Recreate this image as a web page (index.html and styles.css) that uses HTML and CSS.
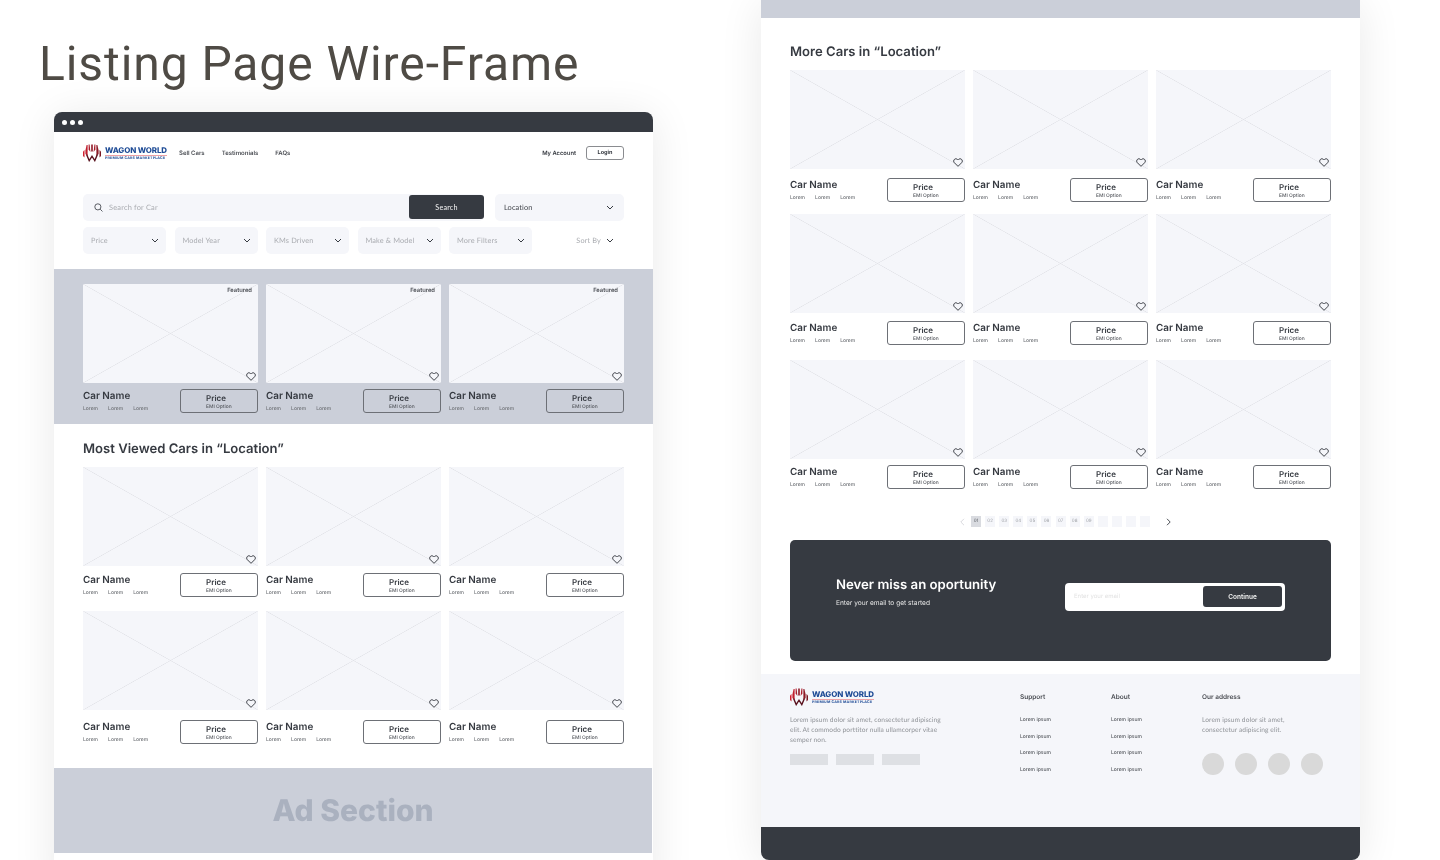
FILE: index.html
```html
<!DOCTYPE html>
<html lang="en">
<head>
<meta charset="utf-8">
<title>Listing Page Wire-Frame</title>
<link rel="stylesheet" href="styles.css">
</head>
<body>
<svg class="defs" aria-hidden="true">
  <symbol id="heart" viewBox="0 0 12 11"><path d="M6 10.2 1.5 5.7a2.8 2.8 0 0 1 0-3.9 2.7 2.7 0 0 1 3.9 0l.6.6.6-.6a2.7 2.7 0 0 1 3.9 0 2.8 2.8 0 0 1 0 3.9z" fill="none" stroke="currentColor" stroke-width="1.15"/></symbol>
  <symbol id="chev" viewBox="0 0 8 5"><path d="M1 1l3 3 3-3" fill="none" stroke="currentColor" stroke-width="1"/></symbol>
  <symbol id="mark" viewBox="0 0 18 18">
    <path d="M0 7.5 1.5 6V13.5L0 12z" fill="#d0202f"/>
    <path d="M2.4 6.5 3.6 1 4.6 1V12L2.4 10z" fill="#c01e2d"/>
    <path d="M5.6 0.5H6.6L7.4 8 5.6 5.5z" fill="#a81b2a"/>
    <path d="M8.2 0 9 1 9.8 0V7L9 8 8.2 7z" fill="#8f1a27"/>
    <path d="M11.4 0.5H12.4V5.5L10.6 8z" fill="#a81b2a"/>
    <path d="M13.4 1 14.4 1 15.6 6.5V10L13.4 12z" fill="#8d1a26"/>
    <path d="M16.5 6 18 7.5V12L16.5 13.5z" fill="#7a1722"/>
    <path d="M3.6 10.5 6.2 16.6 9 12.2 11.8 16.6 14.4 10.5" fill="none" stroke="#5b1420" stroke-width="1.4"/>
  </symbol>
</svg>

<h1 class="title">Listing Page Wire-Frame</h1>

<section class="window window-left">
  <div class="titlebar"><i class="dot"></i><i class="dot"></i><i class="dot"></i></div>
  <header class="topbar">
    <div class="logo"><svg class="logo-mark"><use href="#mark"/></svg><div class="logo-text"><b>WAGON WORLD</b><span>PREMIUM CARS MARKETPLACE</span></div></div>
    <nav class="nav"><a>Sell Cars</a><a>Testimonials</a><a>FAQs</a></nav>
    <a class="account">My Account</a>
    <a class="login">Login</a>
  </header>

  <div class="search-row">
    <div class="search-box">
      <svg class="search-icon" viewBox="0 0 10 10"><circle cx="4.3" cy="4.3" r="3.4" fill="none" stroke="currentColor" stroke-width=".9"/><path d="M6.9 6.9 9.4 9.4" stroke="currentColor" stroke-width=".9"/></svg>
      <span class="placeholder">Search for Car</span>
      <button class="search-btn">Search</button>
    </div>
    <div class="location"><span>Location</span><svg class="chev"><use href="#chev"/></svg></div>
  </div>

  <div class="filter-row">
    <div class="filter"><span>Price</span><svg class="chev"><use href="#chev"/></svg></div>
    <div class="filter"><span>Model Year</span><svg class="chev"><use href="#chev"/></svg></div>
    <div class="filter"><span>KMs Driven</span><svg class="chev"><use href="#chev"/></svg></div>
    <div class="filter"><span>Make &amp; Model</span><svg class="chev"><use href="#chev"/></svg></div>
    <div class="filter"><span>More Filters</span><svg class="chev"><use href="#chev"/></svg></div>
    <div class="sort"><span>Sort By</span><svg class="chev"><use href="#chev"/></svg></div>
  </div>

  <section class="featured">
    <div class="cards g6">
      <article class="card"><div class="photo"><span class="tag">Featured</span><svg class="heart"><use href="#heart"/></svg></div><div class="info"><div class="meta"><h3>Car Name</h3><p><span>Lorem</span><span>Lorem</span><span>Lorem</span></p></div><div class="price"><b>Price</b><small>EMI Option</small></div></div></article>
      <article class="card"><div class="photo"><span class="tag">Featured</span><svg class="heart"><use href="#heart"/></svg></div><div class="info"><div class="meta"><h3>Car Name</h3><p><span>Lorem</span><span>Lorem</span><span>Lorem</span></p></div><div class="price"><b>Price</b><small>EMI Option</small></div></div></article>
      <article class="card"><div class="photo"><span class="tag">Featured</span><svg class="heart"><use href="#heart"/></svg></div><div class="info"><div class="meta"><h3>Car Name</h3><p><span>Lorem</span><span>Lorem</span><span>Lorem</span></p></div><div class="price"><b>Price</b><small>EMI Option</small></div></div></article>
    </div>
  </section>

  <section class="listing">
    <h2>Most Viewed Cars in “Location”</h2>
    <div class="cards g7">
      <article class="card"><div class="photo"><svg class="heart"><use href="#heart"/></svg></div><div class="info"><div class="meta"><h3>Car Name</h3><p><span>Lorem</span><span>Lorem</span><span>Lorem</span></p></div><div class="price"><b>Price</b><small>EMI Option</small></div></div></article>
      <article class="card"><div class="photo"><svg class="heart"><use href="#heart"/></svg></div><div class="info"><div class="meta"><h3>Car Name</h3><p><span>Lorem</span><span>Lorem</span><span>Lorem</span></p></div><div class="price"><b>Price</b><small>EMI Option</small></div></div></article>
      <article class="card"><div class="photo"><svg class="heart"><use href="#heart"/></svg></div><div class="info"><div class="meta"><h3>Car Name</h3><p><span>Lorem</span><span>Lorem</span><span>Lorem</span></p></div><div class="price"><b>Price</b><small>EMI Option</small></div></div></article>
    </div>
    <div class="cards g10 next-14">
      <article class="card"><div class="photo"><svg class="heart"><use href="#heart"/></svg></div><div class="info"><div class="meta"><h3>Car Name</h3><p><span>Lorem</span><span>Lorem</span><span>Lorem</span></p></div><div class="price"><b>Price</b><small>EMI Option</small></div></div></article>
      <article class="card"><div class="photo"><svg class="heart"><use href="#heart"/></svg></div><div class="info"><div class="meta"><h3>Car Name</h3><p><span>Lorem</span><span>Lorem</span><span>Lorem</span></p></div><div class="price"><b>Price</b><small>EMI Option</small></div></div></article>
      <article class="card"><div class="photo"><svg class="heart"><use href="#heart"/></svg></div><div class="info"><div class="meta"><h3>Car Name</h3><p><span>Lorem</span><span>Lorem</span><span>Lorem</span></p></div><div class="price"><b>Price</b><small>EMI Option</small></div></div></article>
    </div>
  </section>

  <div class="ad">Ad Section</div>
</section>

<section class="window window-right">
  <div class="topband"></div>
  <section class="listing listing-more">
    <h2>More Cars in “Location”</h2>
    <div class="cards g9">
      <article class="card"><div class="photo"><svg class="heart"><use href="#heart"/></svg></div><div class="info"><div class="meta"><h3>Car Name</h3><p><span>Lorem</span><span>Lorem</span><span>Lorem</span></p></div><div class="price"><b>Price</b><small>EMI Option</small></div></div></article>
      <article class="card"><div class="photo"><svg class="heart"><use href="#heart"/></svg></div><div class="info"><div class="meta"><h3>Car Name</h3><p><span>Lorem</span><span>Lorem</span><span>Lorem</span></p></div><div class="price"><b>Price</b><small>EMI Option</small></div></div></article>
      <article class="card"><div class="photo"><svg class="heart"><use href="#heart"/></svg></div><div class="info"><div class="meta"><h3>Car Name</h3><p><span>Lorem</span><span>Lorem</span><span>Lorem</span></p></div><div class="price"><b>Price</b><small>EMI Option</small></div></div></article>
    </div>
    <div class="cards g8 next-12">
      <article class="card"><div class="photo"><svg class="heart"><use href="#heart"/></svg></div><div class="info"><div class="meta"><h3>Car Name</h3><p><span>Lorem</span><span>Lorem</span><span>Lorem</span></p></div><div class="price"><b>Price</b><small>EMI Option</small></div></div></article>
      <article class="card"><div class="photo"><svg class="heart"><use href="#heart"/></svg></div><div class="info"><div class="meta"><h3>Car Name</h3><p><span>Lorem</span><span>Lorem</span><span>Lorem</span></p></div><div class="price"><b>Price</b><small>EMI Option</small></div></div></article>
      <article class="card"><div class="photo"><svg class="heart"><use href="#heart"/></svg></div><div class="info"><div class="meta"><h3>Car Name</h3><p><span>Lorem</span><span>Lorem</span><span>Lorem</span></p></div><div class="price"><b>Price</b><small>EMI Option</small></div></div></article>
    </div>
    <div class="cards g6 next-15">
      <article class="card"><div class="photo"><svg class="heart"><use href="#heart"/></svg></div><div class="info"><div class="meta"><h3>Car Name</h3><p><span>Lorem</span><span>Lorem</span><span>Lorem</span></p></div><div class="price"><b>Price</b><small>EMI Option</small></div></div></article>
      <article class="card"><div class="photo"><svg class="heart"><use href="#heart"/></svg></div><div class="info"><div class="meta"><h3>Car Name</h3><p><span>Lorem</span><span>Lorem</span><span>Lorem</span></p></div><div class="price"><b>Price</b><small>EMI Option</small></div></div></article>
      <article class="card"><div class="photo"><svg class="heart"><use href="#heart"/></svg></div><div class="info"><div class="meta"><h3>Car Name</h3><p><span>Lorem</span><span>Lorem</span><span>Lorem</span></p></div><div class="price"><b>Price</b><small>EMI Option</small></div></div></article>
    </div>

    <nav class="pager">
      <svg class="pg-arrow pg-prev" viewBox="0 0 5 8"><path d="M4 .8.8 4 4 7.2" fill="none" stroke="currentColor" stroke-width=".8"/></svg>
      <a class="active">01</a><a>02</a><a>03</a><a>04</a><a>05</a><a>06</a><a>07</a><a>08</a><a>09</a><a></a><a></a><a></a><a></a>
      <svg class="pg-arrow pg-next" viewBox="0 0 5 8"><path d="M1 .8 4.2 4 1 7.2" fill="none" stroke="currentColor" stroke-width=".9"/></svg>
    </nav>

    <div class="cta">
      <div class="cta-copy">
        <h2>Never miss an oportunity</h2>
        <p>Enter your email to get started</p>
      </div>
      <div class="cta-form"><span>Enter your email</span><button>Continue</button></div>
    </div>
  </section>

  <footer class="footer">
    <div class="f-brand">
      <div class="logo"><svg class="logo-mark"><use href="#mark"/></svg><div class="logo-text"><b>WAGON WORLD</b><span>PREMIUM CARS MARKETPLACE</span></div></div>
      <p>Lorem ipsum dolor sit amet, consectetur adipiscing elit. At commodo porttitor nulla ullamcorper vitae semper non.</p>
      <div class="f-stores"><i></i><i></i><i></i></div>
    </div>
    <div class="f-col"><h4>Support</h4><a>Lorem ipsum</a><a>Lorem ipsum</a><a>Lorem ipsum</a><a>Lorem ipsum</a></div>
    <div class="f-col"><h4>About</h4><a>Lorem ipsum</a><a>Lorem ipsum</a><a>Lorem ipsum</a><a>Lorem ipsum</a></div>
    <div class="f-col f-address"><h4>Our address</h4><p>Lorem ipsum dolor sit amet, consectetur adipiscing elit.</p><div class="f-social"><i></i><i></i><i></i><i></i></div></div>
  </footer>
  <div class="bottombar"></div>
</section>
</body>
</html>
```

FILE: styles.css
```css
* { box-sizing: border-box; margin: 0; padding: 0; }
html, body { width: 1440px; height: 860px; overflow: hidden; background: #fff; }
body { position: relative; font-family: "Inter", "Liberation Sans", sans-serif; color: #363a41; text-rendering: geometricPrecision; }
.defs { position: absolute; width: 0; height: 0; }
a { display: block; }

.title { position: absolute; left: 39px; top: 35px; font: 400 48px/58px "Roboto", sans-serif; color: #4f4b45; letter-spacing: .92px; white-space: nowrap; will-change: transform; }

.window { position: absolute; width: 599px; background: #fff; box-shadow: 0 4px 44px rgba(0, 0, 0, .09); will-change: transform; }
.window-left { left: 54px; top: 112px; height: 780px; border-radius: 8px 8px 0 0; }
.window-right { left: 761px; top: 0; height: 860px; border-radius: 0 0 8px 8px; }

.titlebar { height: 20px; background: #363a41; border-radius: 8px 8px 0 0; display: flex; align-items: center; gap: 3px; padding-left: 8px; }
.dot { width: 5px; height: 5px; border-radius: 50%; background: #fff; }

.topbar { height: 42px; padding: 0 29px; display: flex; align-items: center; font-size: 5.5px; font-weight: 500; }
.nav { display: flex; gap: 17px; margin-left: 12px; font-size: 6px; font-weight: 600; color: #4a4d53; }
.account { margin-left: auto; font-size: 5.8px; font-weight: 600; color: #363a41; }
.login { width: 38px; height: 14px; margin-left: 10px; border: 1px solid #8a8c90; border-radius: 3px; display: flex; align-items: center; justify-content: center; font-weight: 700; }

.logo { display: flex; align-items: center; gap: 4px; height: 18px; }
.logo-mark { width: 18px; height: 18px; flex: none; }
.logo-text { display: flex; flex-direction: column; width: 62px; padding-top: 2px; }
.logo-text b { font: 800 7.95px/7.5px "Inter", sans-serif; color: #1f4c96; border-bottom: 1px solid #eda2a6; padding-bottom: 1px; white-space: nowrap; letter-spacing: -.12px; }
.logo-text span { font: 700 3.6px/5px "Inter", sans-serif; color: #1f4c96; white-space: nowrap; letter-spacing: .17px; }

.search-row { margin: 20px 29px 0; display: flex; gap: 11px; height: 27px; }
.search-box { width: 401px; background: #f5f6fa; border-radius: 5px; display: flex; align-items: center; padding: 0 0 0 11px; }
.search-icon { width: 9px; height: 9px; color: #363a41; flex: none; }
.placeholder { margin-left: 6px; font: 400 7.4px "Lato", sans-serif; color: #a9abb0; letter-spacing: .2px; }
.search-btn { margin: 0 0 2px auto; width: 75px; height: 24px; padding-top: 1px; background: #363a41; border: 0; border-radius: 3px; color: #f2f2f2; font: 400 7.2px "Lato", sans-serif; letter-spacing: .2px; }
.location { flex: 1; background: #f5f6fa; border-radius: 5px; display: flex; align-items: center; justify-content: space-between; padding: 0 10px 0 9px; font: 400 7.4px "Lato", sans-serif; color: #43464c; letter-spacing: .1px; }
.chev { width: 8px; height: 5px; color: #363a41; flex: none; }

.filter-row { margin: 6px 29px 0; display: flex; gap: 8.5px; height: 27px; }
.filter { width: 83px; background: #f5f6fa; border-radius: 5px; display: flex; align-items: center; justify-content: space-between; padding: 0 7px 0 8px; font: 400 7.3px "Lato", sans-serif; color: #a9abb0; letter-spacing: .15px; white-space: nowrap; }
.sort { margin-left: auto; padding: 0 10px 0 0; display: flex; align-items: center; gap: 5px; font: 400 7.3px "Lato", sans-serif; color: #a9abb0; letter-spacing: .15px; }

.featured { margin-top: 15px; height: 155px; background: #cbcfd9; padding: 15px 29px 0; }
.cards { display: grid; grid-template-columns: repeat(3, 175px); column-gap: 8px; }
.next-12 { margin-top: 12px; }
.next-14 { margin-top: 14px; }
.next-15 { margin-top: 15px; }
.g6 .info { margin-top: 6px; }
.g7 .info { margin-top: 7px; }
.g8 .info { margin-top: 8px; }
.g9 .info { margin-top: 9px; }
.g10 .info { margin-top: 10px; }

.photo { position: relative; height: 99px; border-radius: 1px; background-color: #f5f6fa;
  background-image:
    linear-gradient(to top right, transparent calc(50% - .6px), #e2e3e8 50%, transparent calc(50% + .6px)),
    linear-gradient(to bottom right, transparent calc(50% - .6px), #e2e3e8 50%, transparent calc(50% + .6px)); }
.tag { position: absolute; top: 3px; right: 6px; font-size: 5.8px; line-height: 7px; font-weight: 600; color: #4a4d53; }
.heart { position: absolute; right: 2px; bottom: 2px; width: 10px; height: 9px; color: #363a41; }

.info { display: flex; justify-content: space-between; height: 24px; }
.meta h3 { font-size: 9.9px; line-height: 14px; font-weight: 600; color: #363a41; }
.meta p { display: flex; gap: 10px; margin-top: 3px; font-size: 5px; line-height: 7px; font-weight: 500; color: #6f7277; }
.price { width: 78px; height: 24px; border: 1px solid #6d7076; border-radius: 3px; padding: 3px 0 0 25px; display: flex; flex-direction: column; align-items: flex-start; }
.price b { font-size: 8px; line-height: 10px; font-weight: 600; color: #363a41; }
.price small { margin-top: 1px; font-size: 4.9px; line-height: 6px; font-weight: 500; color: #55585e; white-space: nowrap; }

.listing { padding: 14px 29px 0; }
.listing h2 { padding-top: 1px; font-size: 13.1px; line-height: 20px; font-weight: 600; color: #363a41; margin-bottom: 8px; }
.listing-more { padding-top: 23px; }

.ad { margin: 24px 1px 0 0; height: 85px; background: #cbcfd9; display: flex; align-items: center; justify-content: center; font-size: 30px; font-weight: 800; color: #aab1bf; }

.topband { height: 18px; background: #cbcfd9; }

.pager { position: relative; margin-top: 27px; height: 11px; display: flex; gap: 4.1px; padding-left: 181px; }
.pager a { width: 10px; height: 11px; background: #f5f6fa; font-size: 4.5px; line-height: 11px; text-align: center; color: #a0a3a8; }
.pager a.active { background: #d9dbe0; color: #55585e; }
.pg-arrow { position: absolute; top: 1.5px; width: 5px; height: 8px; }
.pg-prev { left: 170px; color: #cfd1d5; }
.pg-next { left: 376px; color: #363a41; }

.cta { margin-top: 13px; height: 121px; background: #363a41; border-radius: 5px; padding: 37px 46px 0; display: flex; justify-content: space-between; align-items: flex-start; }
.listing .cta-copy h2 { padding: 0; font-size: 13.2px; line-height: 17px; font-weight: 600; color: #fff; margin: 0; }
.cta-copy p { margin-top: 5px; font-size: 6.6px; line-height: 8px; color: #e6e6e6; }
.cta-form { width: 220px; height: 28px; margin-top: 6px; background: #fff; border-radius: 4px; padding: 3px 3px 0 9px; display: flex; justify-content: space-between; }
.cta-form span { font-size: 6px; line-height: 22px; color: #e2e2e2; }
.cta-form button { width: 79px; height: 21px; background: #363a41; border: 0; border-radius: 3px; color: #f4f4f4; font: 600 6.5px "Inter", sans-serif; }

.footer { margin-top: 13px; height: 153px; background: #f5f6fa; padding: 14px 0 0 29px; display: grid; grid-template-columns: 230px 91px 91px 1fr; }
.f-brand p { margin-top: 9px; width: 156px; font: 400 6.6px/10px "Lato", sans-serif; color: #8f9297; letter-spacing: .1px; }
.f-stores { margin-top: 9px; display: flex; gap: 8px; }
.f-stores i { width: 38px; height: 11px; background: #dee0e4; }
.f-col { padding-top: 3px; }
.f-col h4 { font-size: 6.5px; line-height: 12px; font-weight: 600; color: #4a4d53; margin-bottom: 9px; }
.f-col a { height: 16.5px; font-size: 5px; line-height: 16.5px; font-weight: 500; color: #55585e; }
.f-address h4 { margin-bottom: 12px; }
.f-address p { width: 92px; font: 400 6.6px/10px "Lato", sans-serif; color: #8f9297; letter-spacing: .1px; }
.f-social { margin-top: 18px; display: flex; gap: 11px; }
.f-social i { width: 22px; height: 22px; border-radius: 50%; background: #d9d9d9; }

.bottombar { height: 33px; background: #363a41; border-radius: 0 0 8px 8px; }
```
